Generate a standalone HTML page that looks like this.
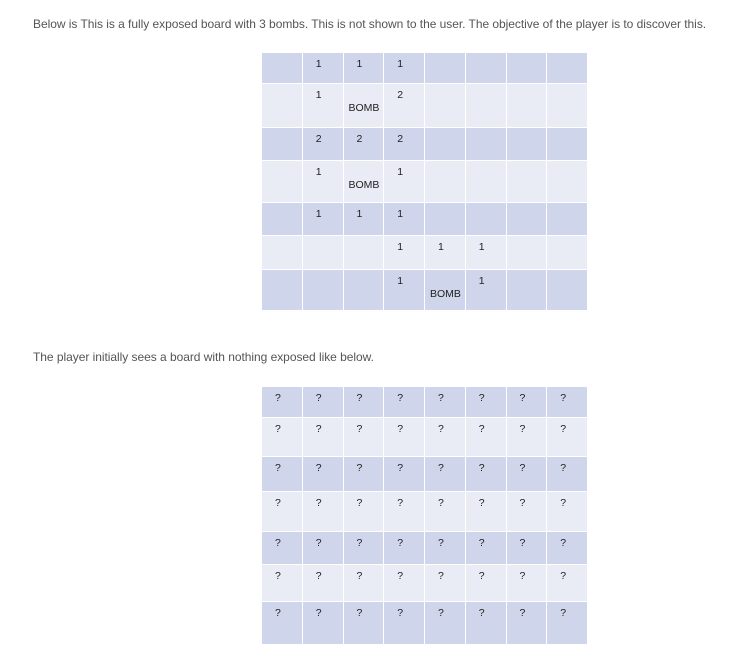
<!DOCTYPE html>
<html><head><meta charset="utf-8"><style>
body{margin:0;background:#fff;width:733px;height:655px;position:relative;font-family:"Segoe UI","Liberation Sans",sans-serif;color:#555;}
.t{position:absolute;left:33px;font-size:12px;white-space:nowrap;letter-spacing:-0.04px;}
.g{position:absolute;left:262px;display:grid;grid-template-columns:repeat(8,39.75px);column-gap:1px;row-gap:1px;}
.g div{font-size:10.5px;color:#222;padding:5px 0 0 13px;box-sizing:border-box;line-height:13px;}
.d{background:#cfd5ea}.l{background:#e9ebf5}
.g div.b{padding-left:5px;padding-top:18px}
</style></head><body>
<div class="t" style="top:17px">Below is This is a fully exposed board with 3 bombs. This is not shown to the user. The objective of the player is to discover this.</div>
<div class="g" style="top:53px;grid-template-rows:30px 43px 32px 41px 32px 33px 40px">
<div class="d"></div><div class="d">1</div><div class="d">1</div><div class="d">1</div><div class="d"></div><div class="d"></div><div class="d"></div><div class="d"></div>
<div class="l"></div><div class="l">1</div><div class="l b">BOMB</div><div class="l">2</div><div class="l"></div><div class="l"></div><div class="l"></div><div class="l"></div>
<div class="d"></div><div class="d">2</div><div class="d">2</div><div class="d">2</div><div class="d"></div><div class="d"></div><div class="d"></div><div class="d"></div>
<div class="l"></div><div class="l">1</div><div class="l b">BOMB</div><div class="l">1</div><div class="l"></div><div class="l"></div><div class="l"></div><div class="l"></div>
<div class="d"></div><div class="d">1</div><div class="d">1</div><div class="d">1</div><div class="d"></div><div class="d"></div><div class="d"></div><div class="d"></div>
<div class="l"></div><div class="l"></div><div class="l"></div><div class="l">1</div><div class="l">1</div><div class="l">1</div><div class="l"></div><div class="l"></div>
<div class="d"></div><div class="d"></div><div class="d"></div><div class="d">1</div><div class="d b">BOMB</div><div class="d">1</div><div class="d"></div><div class="d"></div>
</div>
<div class="t" style="top:350px">The player initially sees a board with nothing exposed like below.</div>
<div class="g" style="top:387px;grid-template-rows:30px 38px 34px 39px 32px 36px 42px">
<div class="d">?</div><div class="d">?</div><div class="d">?</div><div class="d">?</div><div class="d">?</div><div class="d">?</div><div class="d">?</div><div class="d">?</div>
<div class="l">?</div><div class="l">?</div><div class="l">?</div><div class="l">?</div><div class="l">?</div><div class="l">?</div><div class="l">?</div><div class="l">?</div>
<div class="d">?</div><div class="d">?</div><div class="d">?</div><div class="d">?</div><div class="d">?</div><div class="d">?</div><div class="d">?</div><div class="d">?</div>
<div class="l">?</div><div class="l">?</div><div class="l">?</div><div class="l">?</div><div class="l">?</div><div class="l">?</div><div class="l">?</div><div class="l">?</div>
<div class="d">?</div><div class="d">?</div><div class="d">?</div><div class="d">?</div><div class="d">?</div><div class="d">?</div><div class="d">?</div><div class="d">?</div>
<div class="l">?</div><div class="l">?</div><div class="l">?</div><div class="l">?</div><div class="l">?</div><div class="l">?</div><div class="l">?</div><div class="l">?</div>
<div class="d">?</div><div class="d">?</div><div class="d">?</div><div class="d">?</div><div class="d">?</div><div class="d">?</div><div class="d">?</div><div class="d">?</div>
</div>
</body></html>
